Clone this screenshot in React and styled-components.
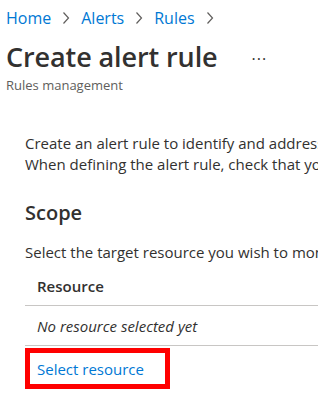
import styled, { createGlobalStyle } from "styled-components";

const GlobalStyle = createGlobalStyle`
  html, body {
    margin: 0;
    padding: 0;
    background: #fff;
    overflow: hidden;
  }
  body {
    font-family: "Segoe UI", "Open Sans", "Noto Sans", sans-serif;
    color: #323130;
  }
`;

const Page = styled.div`
  width: 318px;
  height: 400px;
  overflow: hidden;
  white-space: nowrap;
`;

const Header = styled.header`
  padding: 6px 0 0 6px;
`;

const Breadcrumb = styled.nav`
  display: flex;
  align-items: center;
  gap: 11px;
  font-size: 16px;
  line-height: 24px;
`;

const Crumb = styled.a`
  color: #0078d4;
  text-decoration: none;
`;

const Chevron = styled.svg`
  width: 8px;
  height: 14px;
  stroke: #605e5c;
  fill: none;
  stroke-width: 1.2;
`;

const TitleRow = styled.div`
  display: flex;
  align-items: center;
  gap: 34px;
  margin-top: 8px;
`;

const Title = styled.h1`
  margin: 0;
  font-size: 27px;
  font-weight: 600;
  line-height: 38px;
  letter-spacing: -0.1px;
`;

const MoreButton = styled.button`
  border: 0;
  background: none;
  padding: 0;
  font-family: inherit;
  font-size: 16px;
  color: #323130;
  letter-spacing: 1px;
  margin-top: 4px;
`;

const Subtitle = styled.div`
  font-size: 13px;
  line-height: 18px;
  color: #605e5c;
`;

const Content = styled.main`
  padding: 39px 0 0 25px;
`;

const Intro = styled.p`
  margin: 0;
  font-size: 15px;
  line-height: 21px;
`;

const SectionTitle = styled.h2`
  margin: 24px 0 0;
  font-size: 20px;
  font-weight: 600;
  line-height: 28px;
`;

const Hint = styled.p`
  margin: 15px 0 0;
  font-size: 15px;
  line-height: 21px;
`;

const Table = styled.div`
  margin-top: 4px;
  width: 600px;
`;

const Row = styled.div`
  display: flex;
  align-items: center;
  height: ${(p) => p.$h}px;
  padding-left: 12px;
  border-bottom: 1px solid #c8c6c4;
  font-size: 15px;
  font-weight: ${(p) => (p.$head ? 600 : 400)};
  font-style: ${(p) => (p.$empty ? "italic" : "normal")};
`;

const Highlight = styled.div`
  display: inline-flex;
  align-items: center;
  box-sizing: border-box;
  width: 145px;
  height: 41px;
  margin-top: 2px;
  padding-left: 7px;
  border: 5px solid #ff0000;
`;

const Link = styled.a`
  color: #0078d4;
  font-size: 15px;
  text-decoration: none;
`;

const ChevronIcon = () => (
  <Chevron viewBox="0 0 8 14">
    <path d="M1.5 1.5 L6.5 7 L1.5 12.5" />
  </Chevron>
);

export default function App() {
  return (
    <Page>
      <GlobalStyle />
      <Header>
        <Breadcrumb>
          <Crumb>Home</Crumb>
          <ChevronIcon />
          <Crumb>Alerts</Crumb>
          <ChevronIcon />
          <Crumb>Rules</Crumb>
          <ChevronIcon />
        </Breadcrumb>
        <TitleRow>
          <Title>Create alert rule</Title>
          <MoreButton>···</MoreButton>
        </TitleRow>
        <Subtitle>Rules management</Subtitle>
      </Header>
      <Content>
        <Intro>
          Create an alert rule to identify and address issues when important conditions are found in your monitoring data.
          <br />
          When defining the alert rule, check that your inputs do not produce unintended results.
        </Intro>
        <SectionTitle>Scope</SectionTitle>
        <Hint>Select the target resource you wish to monitor.</Hint>
        <Table>
          <Row $head $h={38}>Resource</Row>
          <Row $empty $h={39}>No resource selected yet</Row>
        </Table>
        <Highlight>
          <Link>Select resource</Link>
        </Highlight>
      </Content>
    </Page>
  );
}
